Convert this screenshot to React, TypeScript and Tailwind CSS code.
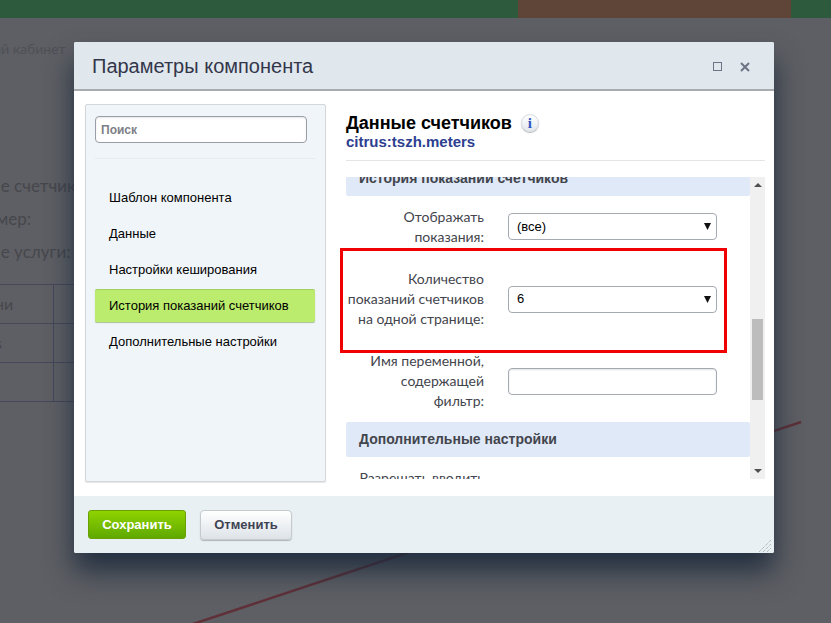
const formFont = "font-['Lato',sans-serif]"

function FormRow({ label, value, input, lift }: { label: React.ReactNode; value?: string; input?: boolean; lift?: boolean }) {
  return (
    <div className="flex items-center py-[11px]">
      <div className={`w-[138px] text-right text-[14px] leading-[20px] text-[#43454d] ${formFont}`}>{label}</div>
      {input && (
        <div className="ml-6 h-[27px] w-[209px] rounded-[4px] border border-[#a5a9b2] bg-white shadow-[inset_0_1px_2px_rgba(0,0,0,0.12)]" />
      )}
      {value && (
        <div className={`ml-6 flex h-[27px] w-[209px] items-center justify-between rounded-[4px] border border-[#a5a9b2] bg-white pl-2 pr-[5px] text-[13px] text-black ${lift ? '-mt-px' : ''}`}>
          <span>{value}</span>
          <svg width="7" height="7" viewBox="0 0 7 7">
            <path d="M0 0h7L3.5 7z" fill="#111" />
          </svg>
        </div>
      )}
    </div>
  )
}

function SectionHead({ title, clip }: { title: string; clip?: boolean }) {
  return (
    <div className={`flex h-[35px] items-center rounded-[2px] bg-[#e0e9f7] px-[13px] text-[14px] font-bold text-[#43454d] ${clip ? '-mt-4' : ''}`}>
      {title}
    </div>
  )
}

const menu = ['Шаблон компонента', 'Данные', 'Настройки кеширования', 'История показаний счетчиков', 'Дополнительные настройки']

export default function App() {
  return (
    <div className="relative h-[623px] w-[831px] overflow-hidden bg-[#5e5f64] font-['Liberation_Sans',Arial,sans-serif]">
      {/* page behind the overlay */}
      <div className="flex h-[18px]">
        <div className="w-[518px] bg-[#2d5a3c]" />
        <div className="w-[273px] bg-[#5f4538]" />
        <div className="flex-1 bg-[#2d5a3c]" />
      </div>
      <div className={`text-[#46474c] ${formFont}`}>
        <div className="-ml-[24px] pt-[21px] text-[14px] leading-[20px] text-[#4f5055]">чный кабинет</div>
        <div className="-ml-[9px] mt-[117px] flex flex-col gap-[13px] text-[17px] leading-[20px]">
          <div>ие счетчиков</div>
          <div className="ml-[-17px]">Номер:</div>
          <div>ие услуги: 1</div>
        </div>
        <div className="mt-[22px] w-[200px] border-t border-[#45485a] text-[16px]">
          {['ни', 's', ''].map((t, i) => (
            <div key={i} className="flex h-[39px] items-center border-b border-[#45485a]">
              <div className="h-full w-[54px] overflow-hidden border-r border-[#45485a] leading-[38px]">
                <span className="-ml-[5px] block">{t}</span>
              </div>
            </div>
          ))}
        </div>
      </div>
      <svg className="absolute inset-0" width="831" height="623">
        <path d="M801 422L190 625" stroke="#5f3038" strokeWidth="2.5" />
      </svg>

      {/* dialog */}
      <div className="absolute left-[74px] top-[42px] flex h-[511px] w-[700px] flex-col rounded-[2px] bg-white shadow-[0_18px_28px_rgba(28,42,60,0.9)]">
        <div className="flex h-[49px] items-center justify-between rounded-t-[2px] border-b-2 border-[#a9acaf] bg-[#e0e8ee] pl-[18px] pr-[24px]">
          <div className="text-[20px] text-[#33364a]">Параметры компонента</div>
          <div className="mt-[2px] flex items-center gap-[18px]">
            <div className="h-[9px] w-[9px] border border-[#6b7385]" />
            <svg width="10" height="10" viewBox="0 0 10 10">
              <path d="M1 1l8 8M9 1l-8 8" stroke="#6b7385" strokeWidth="2" />
            </svg>
          </div>
        </div>

        <div className="flex flex-1 pl-[11px] pr-[9px] pt-[13px]">
          <div className="h-[378px] w-[241px] rounded-[2px] border border-[#d3d7da] bg-[#f0f5f9] pl-[9px] pr-[9px] pt-[11px] shadow-[0_1px_1px_rgba(0,0,0,0.1)]">
            <div className="flex h-[27px] w-[212px] items-center rounded-[4px] border border-[#9a9ea9] bg-white pl-[5px] text-[12px] font-bold text-[#7d7f86] shadow-[inset_0_1px_2px_rgba(0,0,0,0.1)]">
              Поиск
            </div>
            <div className="mt-[15px] border-t border-[#e6ebef]" />
            <div className="mt-[22px] flex flex-col gap-[3px]">
              {menu.map((m, i) => (
                <div
                  key={m}
                  className={`flex h-[33px] w-[220px] items-center rounded-[2px] pl-[14px] text-[13px] text-black ${i === 3 ? 'border-t border-[#a3cf62] bg-[#bbec6d] shadow-[0_1px_1px_rgba(100,140,50,0.5)]' : ''}`}
                >
                  {m}
                </div>
              ))}
            </div>
          </div>

          <div className="ml-[20px] flex w-[419px] flex-col">
            <div className="flex items-start pt-[7px]">
              <div className="text-[18px] leading-[24px] font-bold text-black">Данные счетчиков</div>
              <div className="ml-[9px] mt-[3px] flex h-[18px] w-[18px] items-center justify-center rounded-full border border-[#d5dbe2] bg-gradient-to-b from-white to-[#e3e8ee] font-['Liberation_Serif',serif] text-[15px] leading-none font-bold text-[#2f55c0] shadow-[0_1px_1px_rgba(0,0,0,0.3)]">
                i
              </div>
            </div>
            <div className="-mt-px text-[15px] leading-[16px] font-bold text-[#2d4090]">citrus:tszh.meters</div>
            <div className="mt-[10px] border-t border-[#e3e5e7]" />
            <div className="relative mt-4 flex h-[302px]">
              <div className="h-full w-[404px] overflow-hidden">
                <SectionHead title="История показаний счетчиков" clip />
                <FormRow label={<>Отображать<br />показания:</>} value="(все)" lift />
                <FormRow label={<>Количество<br />показаний счетчиков<br />на одной странице:</>} value="6" />
                <FormRow label={<>Имя переменной,<br />содержащей<br />фильтр:</>} input />
                <SectionHead title="Дополнительные настройки" />
                <FormRow label={<>Разрешать вводить<br />показания</>} />
              </div>
              <div className="flex w-[15px] flex-col items-center justify-between bg-[#f0f0f0] py-[6px]">
                <svg width="8" height="4" viewBox="0 0 8 4"><path d="M0 4h8L4 0z" fill="#505050" /></svg>
                <svg width="8" height="4" viewBox="0 0 8 4"><path d="M0 0h8L4 4z" fill="#505050" /></svg>
              </div>
              <div className="absolute left-[406px] top-[142px] h-[81px] w-[11px] bg-[#bdbdbd]" />
              <div className="absolute left-[-6px] top-[71px] h-[105px] w-[387px] border-[3px] border-[#f00000]" />
            </div>
          </div>
        </div>

        <div className="relative flex h-[57px] items-start gap-[14px] rounded-b-[2px] bg-[#e9f0f3] pl-[14px] pt-[14px]">
          <div className="flex h-[29px] w-[98px] items-center justify-center rounded-[3px] border border-[#6ba005] bg-gradient-to-b from-[#8fd400] to-[#5fa800] text-[13px] font-bold text-white">
            Сохранить
          </div>
          <div className="flex h-[30px] w-[92px] items-center justify-center rounded-[4px] border border-[#c5cacf] bg-gradient-to-b from-white to-[#dde3e8] text-[13px] font-bold text-[#3f4354] shadow-[0_1px_1px_rgba(0,0,0,0.25)]">
            Отменить
          </div>
          <svg className="absolute bottom-[1px] right-[3px]" width="12" height="12" viewBox="0 0 12 12">
            <path d="M0 12L12 0M4 12L12 4M8 12L12 8" stroke="#9aa0a3" strokeWidth="1" strokeDasharray="1 1" />
          </svg>
        </div>
      </div>
    </div>
  )
}
